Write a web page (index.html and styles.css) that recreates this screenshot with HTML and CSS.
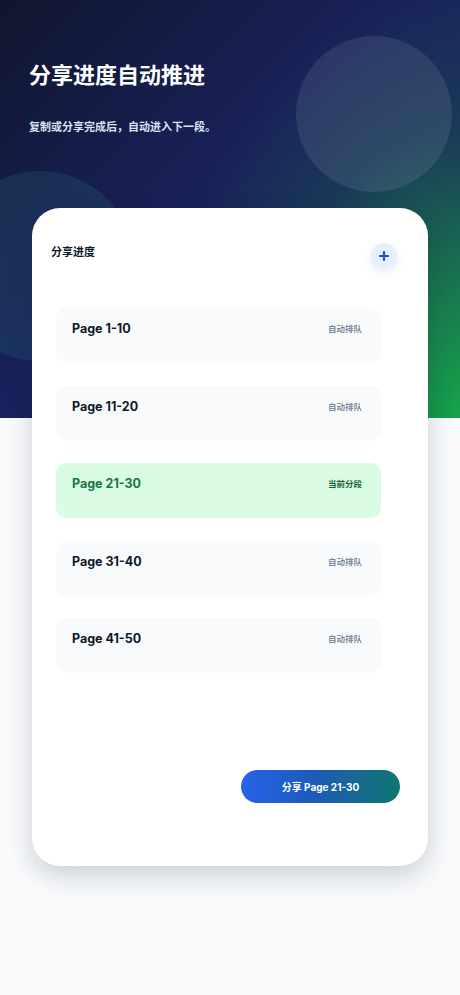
FILE: index.html
```html
<!DOCTYPE html>
<html lang="zh-CN">
<head>
    <meta charset="UTF-8">
    <meta name="viewport" content="width=device-width, initial-scale=1.0">
    <title>分享进度</title>
    <link rel="stylesheet" href="styles.css">
</head>
<body>
    <div class="page">
        <div class="hero">
            <span class="bubble bubble-right"></span>
            <span class="bubble bubble-left"></span>
            <h1>分享进度自动推进</h1>
            <p>复制或分享完成后，自动进入下一段。</p>
        </div>

        <div class="card">
            <div class="card-head">
                <h2>分享进度</h2>
                <button class="add-btn" type="button">
                    <svg width="10" height="10" viewBox="0 0 10 10">
                        <path d="M5 1v8M1 5h8" stroke="#1d4ed8" stroke-width="2.2" stroke-linecap="round"/>
                    </svg>
                </button>
            </div>

            <ul class="segments">
                <li class="segment">
                    <span class="seg-name">Page 1-10</span>
                    <span class="seg-state">自动排队</span>
                </li>
                <li class="segment">
                    <span class="seg-name">Page 11-20</span>
                    <span class="seg-state">自动排队</span>
                </li>
                <li class="segment current">
                    <span class="seg-name">Page 21-30</span>
                    <span class="seg-state">当前分段</span>
                </li>
                <li class="segment">
                    <span class="seg-name">Page 31-40</span>
                    <span class="seg-state">自动排队</span>
                </li>
                <li class="segment">
                    <span class="seg-name">Page 41-50</span>
                    <span class="seg-state">自动排队</span>
                </li>
            </ul>

            <button class="share-btn" type="button">分享 Page 21-30</button>
        </div>
    </div>
</body>
</html>
```

FILE: styles.css
```css
body {
    margin: 0;
    background-color: #f8fafc;
    font-family: Inter, "Noto Sans CJK SC", sans-serif;
}
.page {
    position: relative;
    min-height: 995px;
    /* navy banner with a green glow in the lower right corner, plain grey below */
    background:
        radial-gradient(ellipse 300px 440px at 100% 100%, #16a34a 0%, rgba(22, 140, 72, 0.75) 30%, rgba(26, 90, 80, 0.35) 65%, rgba(27, 42, 94, 0) 100%) top / 100% 418px no-repeat,
        linear-gradient(135deg, #10162e 0%, #19215a 45%, #1b2a5e 72%, #1d4262 100%) top / 100% 418px no-repeat,
        #f8fafc;
    padding-bottom: 1px;
}
.hero {
    position: relative;
    padding: 60px 29px 0;
    height: 148px;
    color: #ffffff;
}
.hero h1 {
    position: relative;
    margin: 0;
    font-size: 22px;
    line-height: 30px;
    font-weight: 700;
}
.hero p {
    position: relative;
    margin: 29px 0 0;
    font-size: 11px;
    line-height: 16px;
    font-weight: 600;
    color: #dbe3f3;
}
.bubble {
    position: absolute;
    border-radius: 50%;
    background-color: rgba(255, 255, 255, 0.09);
}
.bubble-right {
    width: 156px;
    height: 156px;
    left: 296px;
    top: 36px;
}
.bubble-left {
    width: 190px;
    height: 190px;
    left: -55px;
    top: 171px;
    background-color: rgba(40, 120, 130, 0.22);
}

.card {
    position: relative;
    margin: 0 32px;
    height: 658px;
    box-sizing: border-box;
    padding: 35px 32px 63px 19px;
    background-color: #ffffff;
    border-radius: 28px;
    box-shadow: 0 10px 26px rgba(15, 23, 42, 0.18);
    display: flex;
    flex-direction: column;
}
.card-head {
    display: flex;
    justify-content: space-between;
    align-items: flex-start;
}
.card-head h2 {
    margin: 1px 0 0;
    font-size: 11px;
    line-height: 16px;
    font-weight: 700;
    color: #0f172a;
}
.add-btn {
    width: 26px;
    height: 26px;
    margin-right: -1px;
    padding: 0;
    border: none;
    border-radius: 50%;
    background-color: #e5f0fe;
    box-shadow: 0 3px 8px rgba(37, 99, 235, 0.12);
    display: flex;
    justify-content: center;
    align-items: center;
}

.segments {
    list-style: none;
    margin: 39px 0 0 5px;
    padding: 0;
    width: 325px;
    display: flex;
    flex-direction: column;
    gap: 22.5px;
}
.segment {
    height: 55px;
    box-sizing: border-box;
    padding: 13px 19px 0 16px;
    border-radius: 10px;
    background-color: #f8fafc;
    display: flex;
    justify-content: space-between;
    align-items: flex-start;
}
.seg-name {
    font-size: 12.5px;
    line-height: 16px;
    font-weight: 700;
    color: #0f172a;
}
.seg-state {
    font-size: 8.5px;
    line-height: 16px;
    font-weight: 500;
    color: #64748b;
}
.segment.current {
    background-color: #dafbe4;
}
.segment.current .seg-name {
    color: #17763f;
}
.segment.current .seg-state {
    color: #166534;
    font-weight: 700;
}

.share-btn {
    margin-top: auto;
    margin-right: -4px;
    align-self: flex-end;
    width: 159px;
    height: 33px;
    border: none;
    border-radius: 17px;
    background: linear-gradient(90deg, #2563eb 0%, #1d5bb8 45%, #0f766e 100%);
    color: #ffffff;
    font-family: Inter, "Noto Sans CJK SC", sans-serif;
    font-size: 10px;
    font-weight: 700;
}
```
